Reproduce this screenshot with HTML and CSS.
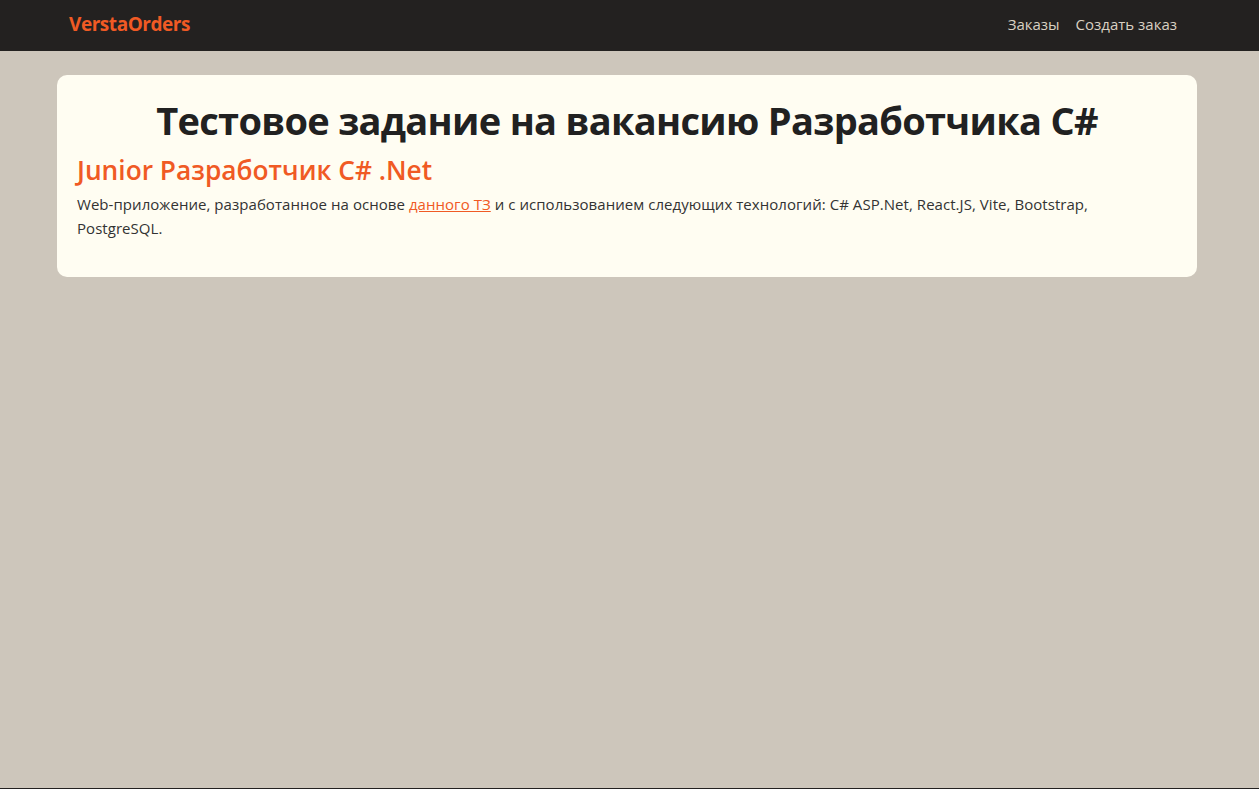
FILE: index.html
```html
<!DOCTYPE html>
<html lang="ru">
<head>
<meta charset="utf-8">
<title>VerstaOrders</title>
<link rel="stylesheet" href="styles.css">
</head>
<body>
<header class="navbar">
  <div class="container nav-inner">
    <a class="brand" href="#">VerstaOrders</a>
    <nav class="nav-links">
      <a href="#">Заказы</a>
      <a href="#">Создать заказ</a>
    </nav>
  </div>
</header>
<main class="main">
  <section class="card">
    <h1 class="title">Тестовое задание на вакансию Разработчика C#</h1>
    <h2 class="subtitle">Junior Разработчик C# .Net</h2>
    <p class="desc">Web-приложение, разработанное на основе <a href="#">данного ТЗ</a> и с использованием следующих технологий: C# ASP.Net, React.JS, Vite, Bootstrap, PostgreSQL.</p>
  </section>
</main>
<footer class="footer"></footer>
</body>
</html>
```
FILE: styles.css
```css
* { box-sizing: border-box; }
html, body { height: 100%; }
body {
  margin: 0;
  background: #cdc6bb;
  font-family: "Open Sans", "Noto Sans", sans-serif;
  color: #212529;
  display: flex;
  flex-direction: column;
}
.navbar {
  background: #232120;
  height: 51px;
  display: flex;
  align-items: center;
}
.container {
  width: 1140px;
  margin-left: 57px;
  padding: 0 12px;
}
.nav-inner {
  display: flex;
  align-items: center;
  justify-content: space-between;
}
.brand {
  color: #f05a24;
  font-weight: 700;
  font-size: 19px;
  text-decoration: none;
  letter-spacing: -0.45px;
  margin-top: -3px;
}
.nav-links { display: flex; margin-top: -3px; }
.nav-links a {
  color: #d9d0c2;
  text-decoration: none;
  font-size: 15px;
  padding: 0 8px;
}
.main {
  flex: 1;
  padding-top: 24px;
}
.card {
  width: 1140px;
  margin-left: 57px;
  background: #fffdf2;
  border-radius: 10px;
  padding: 21px 20px 21px;
}
.title {
  margin: 0 0 9px;
  text-align: center;
  font-size: 38px;
  line-height: 48px;
  font-weight: 700;
  letter-spacing: -0.7px;
  color: #212121;
}
.subtitle {
  margin: 0 0 5px;
  font-size: 26.3px;
  line-height: 34px;
  font-weight: 600;
  color: #f05a24;
}
.desc {
  margin: 0 0 16px;
  font-size: 15px;
  line-height: 24px;
  letter-spacing: 0.05px;
  color: #333;
}
.desc a { color: #f05a24; }
.footer {
  height: 1px;
  background: #232120;
}
```
